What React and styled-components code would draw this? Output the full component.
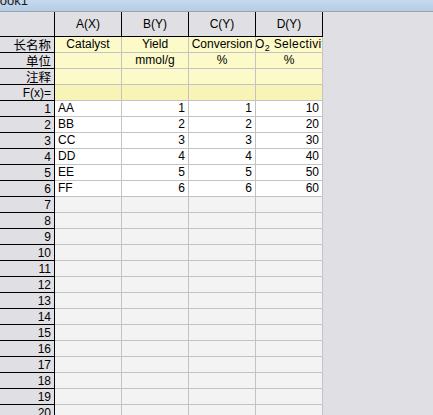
import React from "react";
import styled, { createGlobalStyle } from "styled-components";

const Global = createGlobalStyle`
  html, body { margin: 0; padding: 0; background: #e0dfe4; }
  body { font-family: "Liberation Sans", Arial, sans-serif; font-size: 12px; color: #000; }
`;

const Page = styled.div`
  width: 433px;
  height: 415px;
  overflow: hidden;
  display: flex;
  flex-direction: column;
  background: #e0dfe4;
`;

const TitleBar = styled.div`
  height: 11px;
  flex: none;
  background: linear-gradient(#c6d9ee, #b5cce6);
  border-bottom: 1px solid #9aa3ad;
  overflow: hidden;
`;

const TitleText = styled.div`
  margin-top: -7px;
  margin-left: -9px;
  font-size: 13px;
  line-height: 15px;
  color: #1a1a1a;
`;

const Sheet = styled.div`
  display: flex;
  flex: 1;
  min-height: 0;
`;

const Grid = styled.div`
  display: grid;
  grid-template-columns: 55px repeat(4, 67px);
  grid-auto-rows: 16px;
  grid-template-rows: 25px;
  width: 323px;
  flex: none;
  align-content: start;
`;

const Fill = styled.div`
  flex: 1;
  background: #e0dfe4;
`;

const bgFor = (kind) =>
  ({
    head: "#e0dfe4",
    label: "#fcfac9",
    formula: "#f7f4b5",
    data: "#ffffff",
    empty: "#f3f3f3",
  }[kind]);

const justifyFor = (a) =>
  a === "right" ? "flex-end" : a === "left" || a === "clip" ? "flex-start" : "center";
const padFor = (a) =>
  a === "right" ? "0 3px 0 0" : a === "left" ? "0 0 0 3px" : "0";

const Cell = styled.div`
  box-sizing: border-box;
  display: flex;
  align-items: center;
  justify-content: ${(p) => justifyFor(p.$align)};
  padding: ${(p) => padFor(p.$align)};
  background: ${(p) => bgFor(p.$kind)};
  border-right: 1px solid ${(p) => (p.$kind === "head" ? "#000" : "#c3c3c3")};
  border-bottom: 1px solid ${(p) => (p.$kind === "head" ? "#000" : "#c3c3c3")};
  overflow: hidden;
  white-space: nowrap;
  line-height: 15px;
  font-size: 12px;
`;

const Overflowing = styled.span`
  margin-left: -1px;
  flex: none;
  letter-spacing: 0.35px;
`;

const RowHead = styled.div`
  box-sizing: border-box;
  display: flex;
  align-items: center;
  justify-content: flex-end;
  padding-right: 3px;
  background: #e0dfe4;
  border-right: 1px solid #000;
  border-bottom: 1px solid #000;
  font-family: ${(p) => (p.$cjk ? '"Noto Sans CJK SC", "Liberation Sans", sans-serif' : '"Liberation Sans", Arial, sans-serif')};
  font-size: ${(p) => (p.$cjk ? "12.5px" : "12px")};
  line-height: 14px;
  white-space: nowrap;
  overflow: hidden;
`;

const Sub = styled.sub`
  font-size: 9px;
  line-height: 0;
  vertical-align: -3px;
`;

const columns = ["A(X)", "B(Y)", "C(Y)", "D(Y)"];
const longNames = [
  { text: "Catalyst" },
  { text: "Yield" },
  { text: "Conversion" },
  { text: <Overflowing>O<Sub>2</Sub> Selectivity</Overflowing>, align: "clip" },
];
const units = ["", "mmol/g", "%", "%"];
const data = [
  ["AA", 1, 1, 10],
  ["BB", 2, 2, 20],
  ["CC", 3, 3, 30],
  ["DD", 4, 4, 40],
  ["EE", 5, 5, 50],
  ["FF", 6, 6, 60],
];

export default function App() {
  const emptyRows = [];
  for (let r = 7; r <= 20; r++) emptyRows.push(r);
  return (
    <Page>
      <Global />
      <TitleBar>
        <TitleText>Book1</TitleText>
      </TitleBar>
      <Sheet>
        <Grid>
          <Cell $kind="head" />
          {columns.map((c) => (
            <Cell key={c} $kind="head">{c}</Cell>
          ))}

          <RowHead $cjk>长名称</RowHead>
          {longNames.map((n, i) => (
            <Cell key={i} $kind="label" $align={n.align}>{n.text}</Cell>
          ))}

          <RowHead $cjk>单位</RowHead>
          {units.map((u, i) => (
            <Cell key={i} $kind="label">{u}</Cell>
          ))}

          <RowHead $cjk>注释</RowHead>
          {columns.map((c) => (
            <Cell key={c} $kind="label" />
          ))}

          <RowHead>F(x)=</RowHead>
          {columns.map((c) => (
            <Cell key={c} $kind="formula" />
          ))}

          {data.map((row, r) => (
            <React.Fragment key={r}>
              <RowHead>{r + 1}</RowHead>
              {row.map((v, i) => (
                <Cell key={i} $kind="data" $align={typeof v === "number" ? "right" : "left"}>
                  {v}
                </Cell>
              ))}
            </React.Fragment>
          ))}

          {emptyRows.map((r) => (
            <React.Fragment key={r}>
              <RowHead>{r}</RowHead>
              {columns.map((c) => (
                <Cell key={c} $kind="empty" />
              ))}
            </React.Fragment>
          ))}
        </Grid>
        <Fill />
      </Sheet>
    </Page>
  );
}
